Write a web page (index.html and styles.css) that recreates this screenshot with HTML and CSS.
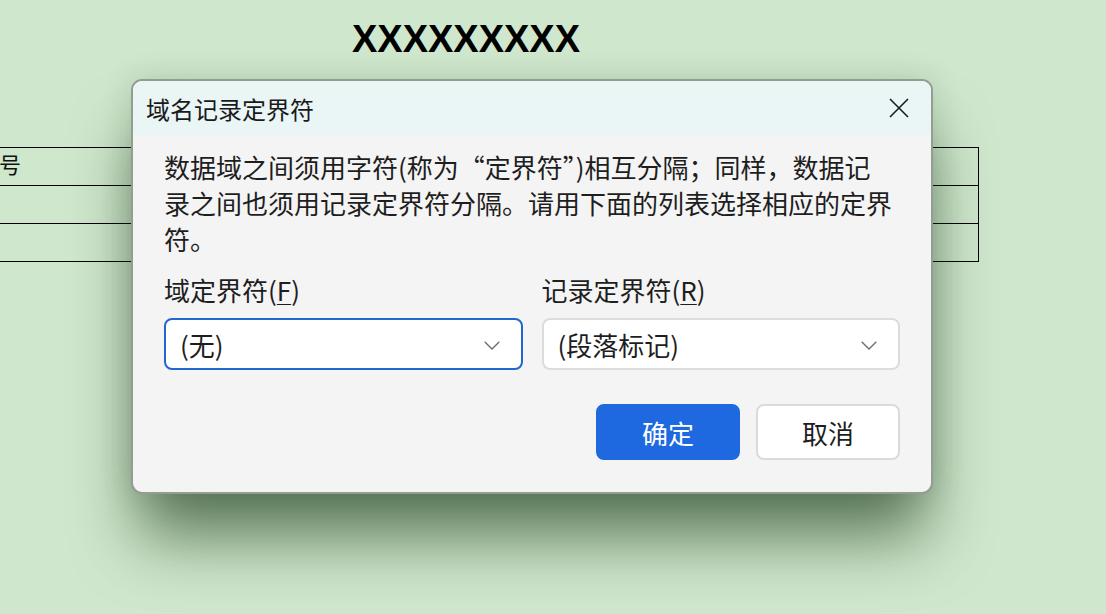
FILE: index.html
```html
<!DOCTYPE html>
<html lang="zh-CN">
<head>
<meta charset="utf-8">
<title>域名记录定界符</title>
<link rel="stylesheet" href="styles.css">
</head>
<body>
<div class="doc">
  <h1 class="doc-title">XXXXXXXXX</h1>
  <table class="doc-table">
    <tr><td class="c1">序号</td><td class="c2"></td><td class="c3"></td></tr>
    <tr><td class="c1"></td><td class="c2"></td><td class="c3"></td></tr>
    <tr><td class="c1"></td><td class="c2"></td><td class="c3"></td></tr>
  </table>
</div>

<div class="dialog" role="dialog" aria-label="域名记录定界符">
  <div class="dialog-header">
    <span class="dialog-title">域名记录定界符</span>
    <button class="close-btn" aria-label="关闭">
      <svg width="20" height="20" viewBox="0 0 20 20"><path d="M1 1 L19 19 M19 1 L1 19" stroke="#1b1b1b" stroke-width="1.6" fill="none"/></svg>
    </button>
  </div>
  <div class="dialog-body">
    <p class="desc">数据域之间须用字符(称为“定界符”)相互分隔；同样，数据记录之间也须用记录定界符分隔。请用下面的列表选择相应的定界符。</p>
    <div class="fields">
      <div class="field">
        <label class="field-label">域定界符(<u>F</u>)</label>
        <div class="select focused">
          <span>(无)</span>
          <svg class="chev" width="16" height="9" viewBox="0 0 16 9"><path d="M0.7 0.7 L8 8 L15.3 0.7" stroke="#6b6b6b" stroke-width="1.3" fill="none"/></svg>
        </div>
      </div>
      <div class="field">
        <label class="field-label">记录定界符(<u>R</u>)</label>
        <div class="select">
          <span>(段落标记)</span>
          <svg class="chev" width="16" height="9" viewBox="0 0 16 9"><path d="M0.7 0.7 L8 8 L15.3 0.7" stroke="#6b6b6b" stroke-width="1.3" fill="none"/></svg>
        </div>
      </div>
    </div>
    <div class="actions">
      <button class="btn primary">确定</button>
      <button class="btn">取消</button>
    </div>
  </div>
</div>
</body>
</html>
```

FILE: styles.css
```css
html, body {
  margin: 0;
  padding: 0;
}
body {
  background: #cfe7cc;
  width: 1106px;
  height: 614px;
  overflow: hidden;
  font-family: "Noto Sans CJK SC", "Noto Sans", sans-serif;
}
.doc {
  width: 1026px;
  margin-left: -47px;
  padding-top: 15px;
}
.doc-title {
  margin: 0;
  text-align: center;
  font-family: "Liberation Sans", Arial, sans-serif;
  font-weight: bold;
  font-size: 38px;
  line-height: 48px;
  color: #000;
}
.doc-table {
  margin-top: 84px;
  width: 100%;
  border-collapse: collapse;
}
.doc-table td {
  border: 1px solid #000;
  height: 37px;
  padding: 0;
  font-family: "Liberation Serif", "Noto Sans CJK SC", serif;
  font-size: 22px;
  line-height: 24px;
  color: #111;
  white-space: nowrap;
  vertical-align: top;
}
.doc-table .c1 {
  width: 200px;
  padding-left: 23px;
  padding-top: 6px;
  height: 31px;
}
.doc-table .c3 {
  width: 200px;
}

.dialog {
  position: absolute;
  left: 131px;
  top: 79px;
  width: 798px;
  border: 2px solid #939d91;
  border-radius: 11px;
  background: #f4f4f4;
  box-shadow: 0 50px 64px -8px rgba(20, 50, 20, 0.62), 0 0 30px rgba(30, 60, 30, 0.15);
  overflow: hidden;
}
.dialog-header {
  height: 54px;
  background: #eaf5f6;
  display: flex;
  align-items: center;
  justify-content: space-between;
  padding: 0 22px 0 13px;
}
.dialog-title {
  font-size: 24px;
  color: #1a1a1a;
}
.close-btn {
  border: none;
  background: transparent;
  padding: 0;
  width: 20px;
  height: 20px;
  display: flex;
}
.dialog-body {
  padding: 14px 31px 32px 31px;
}
.desc {
  margin: 0;
  max-width: 730px;
  font-size: 26px;
  line-height: 36px;
  color: #1e1e1e;
}
.fields {
  margin-top: 15px;
  display: flex;
  gap: 19px;
}
.field {
  flex: 1;
  display: flex;
  flex-direction: column;
  gap: 10px;
}
.field-label {
  font-size: 26px;
  line-height: 36px;
  color: #1e1e1e;
}
.field-label u {
  text-decoration-thickness: 1px;
  text-underline-offset: 3px;
}
.select {
  height: 48px;
  border: 2px solid #dcdcdc;
  border-radius: 8px;
  background: #fff;
  display: flex;
  align-items: center;
  justify-content: space-between;
  padding: 0 21px 0 14px;
  font-size: 26px;
  color: #1e1e1e;
}
.select.focused {
  border-color: #2266d2;
}
.chev {
  margin-top: 2px;
}
.actions {
  margin-top: 34px;
  display: flex;
  justify-content: flex-end;
  gap: 16px;
}
.btn {
  width: 144px;
  height: 56px;
  border-radius: 8px;
  border: 2px solid #dadada;
  background: #fff;
  font-family: "Noto Sans CJK SC", sans-serif;
  font-size: 26px;
  color: #1e1e1e;
  padding: 0;
}
.btn.primary {
  background: #1f69e0;
  border-color: #1f69e0;
  color: #fff;
}
```
